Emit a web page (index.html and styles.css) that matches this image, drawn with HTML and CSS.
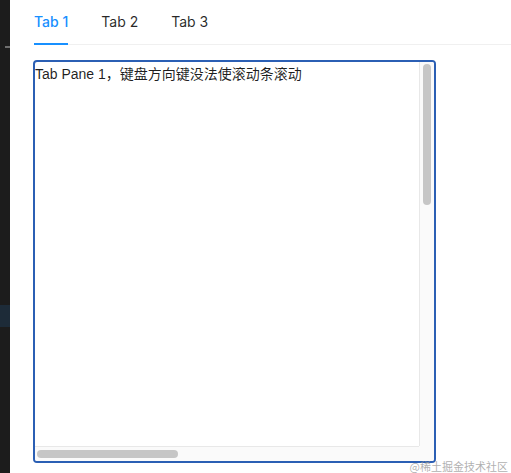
FILE: index.html
```html
<!DOCTYPE html>
<html lang="zh-CN">
<head>
    <meta charset="UTF-8">
    <meta name="viewport" content="width=device-width, initial-scale=1.0">
    <title>Tabs</title>
    <link rel="stylesheet" href="styles.css">
</head>
<body>
    <div class="sidebar">
        <div class="side-mark"></div>
        <div class="side-active"></div>
    </div>
    <div class="main">
        <div class="tabs-nav">
            <div class="tab active">Tab 1</div>
            <div class="tab">Tab 2</div>
            <div class="tab">Tab 3</div>
        </div>
        <div class="pane">
            <div class="pane-view">
                <div class="pane-content">Tab Pane 1，键盘方向键没法使滚动条滚动</div>
            </div>
            <div class="scroll-y"><div class="thumb-y"></div></div>
            <div class="scroll-x"><div class="thumb-x"></div></div>
            <div class="scroll-corner"></div>
        </div>
    </div>
    <div class="watermark">@稀土掘金技术社区</div>
</body>
</html>
```

FILE: styles.css
```css
* {
    margin: 0;
    padding: 0;
    box-sizing: border-box;
}

body {
    font-family: 'Liberation Sans', 'Noto Sans CJK SC', sans-serif;
    font-size: 14px;
    color: rgba(0, 0, 0, 0.88);
    background: #fff;
    display: flex;
    height: 473px;
    overflow: hidden;
}

.sidebar {
    width: 10px;
    flex-shrink: 0;
    background: #1c1c1c;
    display: flex;
    flex-direction: column;
}

.side-mark {
    margin-top: 46px;
    margin-left: 5px;
    height: 2px;
    background: #6e6e6e;
}

.side-active {
    margin-top: 257px;
    height: 22px;
    background: #1d2b38;
}

.main {
    flex: 1;
    padding-left: 23px;
}

.tabs-nav {
    display: flex;
    gap: 33px;
    margin-left: 1px;
    border-bottom: 1px solid #f0f0f0;
}

.tab {
    position: relative;
    padding: 11px 0;
    line-height: 22px;
    font-family: Inter, 'Liberation Sans', sans-serif;
    color: rgba(0, 0, 0, 0.85);
}

.tab.active {
    color: #1890ff;
    font-weight: 500;
}

.tab.active::after {
    content: '';
    position: absolute;
    left: 0;
    right: 0;
    bottom: -1px;
    height: 2px;
    background: #1890ff;
}

.pane {
    margin-top: 15px;
    width: 403px;
    height: 403px;
    border: 2px solid #2b5fb4;
    border-radius: 4px;
    display: grid;
    grid-template-columns: 1fr 15px;
    grid-template-rows: 1fr 15px;
    overflow: hidden;
}

.pane-view {
    overflow: hidden;
}

.pane-content {
    line-height: 22px;
    padding-top: 1px;
    white-space: nowrap;
}

.scroll-y {
    background: #fafafa;
    border-left: 1px solid #e8e8e8;
    padding: 2px 3px 0;
}

.thumb-y {
    width: 8px;
    height: 141px;
    background: #c6c6c6;
    border-radius: 4px;
}

.scroll-x {
    background: #fafafa;
    border-top: 1px solid #e8e8e8;
    padding: 3px 0 0 2px;
}

.thumb-x {
    width: 141px;
    height: 8px;
    background: #c6c6c6;
    border-radius: 4px;
}

.scroll-corner {
    background: #fafafa;
}

.watermark {
    position: absolute;
    right: 3px;
    bottom: 0;
    font-family: 'Noto Sans CJK SC', serif;
    font-size: 11px;
    line-height: 14px;
    color: rgba(150, 150, 150, 0.75);
}
```
